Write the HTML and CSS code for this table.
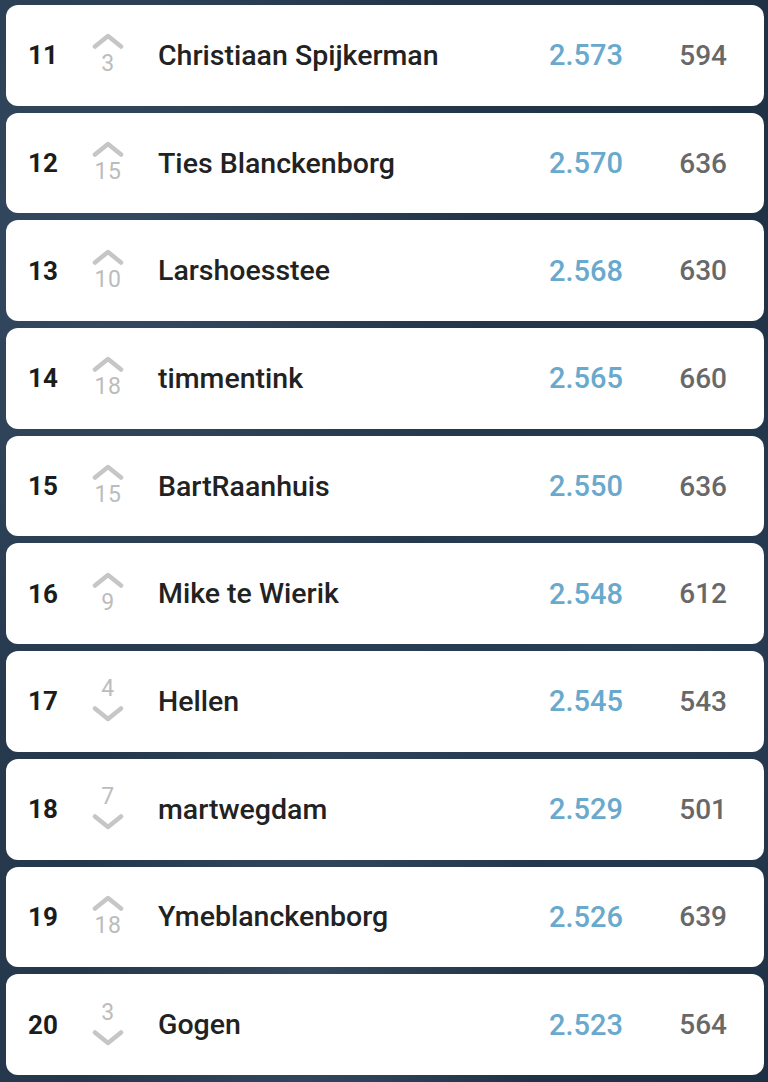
FILE: index.html
```html
<!DOCTYPE html>
<html lang="nl">
<head>
<meta charset="utf-8">
<title>Ranglijst</title>
<link rel="stylesheet" href="styles.css">
</head>
<body>
<main class="list">
  <div class="row"><span class="rank">11</span><span class="move up"><svg class="chev" viewBox="0 0 32 16"><polyline points="3,13.5 16,3 29,13.5"/></svg><span class="delta">3</span></span><span class="name">Christiaan Spijkerman</span><span class="score">2.573</span><span class="pts">594</span></div>
  <div class="row"><span class="rank">12</span><span class="move up"><svg class="chev" viewBox="0 0 32 16"><polyline points="3,13.5 16,3 29,13.5"/></svg><span class="delta">15</span></span><span class="name">Ties Blanckenborg</span><span class="score">2.570</span><span class="pts">636</span></div>
  <div class="row"><span class="rank">13</span><span class="move up"><svg class="chev" viewBox="0 0 32 16"><polyline points="3,13.5 16,3 29,13.5"/></svg><span class="delta">10</span></span><span class="name">Larshoesstee</span><span class="score">2.568</span><span class="pts">630</span></div>
  <div class="row"><span class="rank">14</span><span class="move up"><svg class="chev" viewBox="0 0 32 16"><polyline points="3,13.5 16,3 29,13.5"/></svg><span class="delta">18</span></span><span class="name">timmentink</span><span class="score">2.565</span><span class="pts">660</span></div>
  <div class="row"><span class="rank">15</span><span class="move up"><svg class="chev" viewBox="0 0 32 16"><polyline points="3,13.5 16,3 29,13.5"/></svg><span class="delta">15</span></span><span class="name">BartRaanhuis</span><span class="score">2.550</span><span class="pts">636</span></div>
  <div class="row"><span class="rank">16</span><span class="move up"><svg class="chev" viewBox="0 0 32 16"><polyline points="3,13.5 16,3 29,13.5"/></svg><span class="delta">9</span></span><span class="name">Mike te Wierik</span><span class="score">2.548</span><span class="pts">612</span></div>
  <div class="row"><span class="rank">17</span><span class="move down"><span class="delta">4</span><svg class="chev" viewBox="0 0 32 16"><polyline points="3,2.5 16,13 29,2.5"/></svg></span><span class="name">Hellen</span><span class="score">2.545</span><span class="pts">543</span></div>
  <div class="row"><span class="rank">18</span><span class="move down"><span class="delta">7</span><svg class="chev" viewBox="0 0 32 16"><polyline points="3,2.5 16,13 29,2.5"/></svg></span><span class="name">martwegdam</span><span class="score">2.529</span><span class="pts">501</span></div>
  <div class="row"><span class="rank">19</span><span class="move up"><svg class="chev" viewBox="0 0 32 16"><polyline points="3,13.5 16,3 29,13.5"/></svg><span class="delta">18</span></span><span class="name">Ymeblanckenborg</span><span class="score">2.526</span><span class="pts">639</span></div>
  <div class="row"><span class="rank">20</span><span class="move down"><span class="delta">3</span><svg class="chev" viewBox="0 0 32 16"><polyline points="3,2.5 16,13 29,2.5"/></svg></span><span class="name">Gogen</span><span class="score">2.523</span><span class="pts">564</span></div>
</main>
</body>
</html>
```
FILE: styles.css
```css
html, body {
  margin: 0;
  padding: 0;
}
body {
  width: 768px;
  height: 1082px;
  overflow: hidden;
  background-color: #1f3247;
  background-image:
    radial-gradient(ellipse at 15% 25%, rgba(80, 110, 140, 0.35), transparent 40%),
    radial-gradient(ellipse at 85% 60%, rgba(60, 90, 120, 0.35), transparent 45%),
    radial-gradient(ellipse at 40% 90%, rgba(90, 120, 150, 0.3), transparent 35%),
    linear-gradient(100deg, rgba(255, 255, 255, 0.04), rgba(0, 0, 0, 0.05));
  font-family: Roboto, "Noto Sans", Arial, sans-serif;
}
.list {
  display: flex;
  flex-direction: column;
  gap: 7px;
  padding: 5px 4px 0 6px;
}
.row {
  height: 100.7px;
  background: #ffffff;
  border-radius: 12px;
  display: grid;
  grid-template-columns: 56px 48px 1fr auto 104px;
  align-items: center;
  padding: 0 37px 0 22px;
  box-sizing: border-box;
}
.rank {
  font-size: 26px;
  font-weight: 700;
  color: #1c1c1c;
}
.move {
  display: flex;
  flex-direction: column;
  align-items: center;
}
.move.up { padding-bottom: 4px; }
.move.down { padding-bottom: 0; }
.chev {
  width: 32px;
  height: 16px;
  fill: none;
  stroke: #c6c6c6;
  stroke-width: 4.5;
  stroke-linecap: round;
  stroke-linejoin: round;
}
.move.up .chev { margin-bottom: 6px; }
.move.down .chev { margin-top: 8px; }
.delta {
  font-size: 23px;
  line-height: 18px;
  font-weight: 400;
  letter-spacing: 0.5px;
  color: #bcbcbc;
}
.name {
  margin-left: 26px;
  font-size: 28.5px;
  font-weight: 500;
  color: #222222;
  white-space: nowrap;
}
.score {
  font-size: 29px;
  font-weight: 500;
  color: #69a9cd;
  text-align: right;
}
.pts {
  font-size: 28px;
  font-weight: 500;
  color: #686868;
  text-align: right;
}
```
